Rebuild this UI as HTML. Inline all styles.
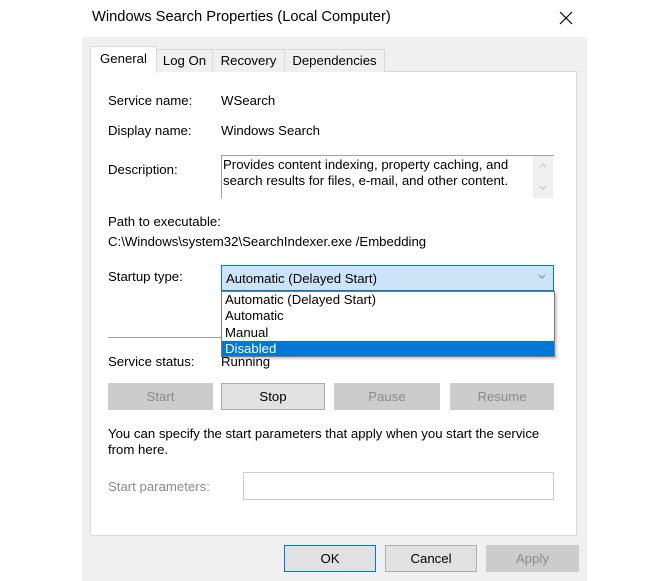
<!DOCTYPE html><html><head><style>
body{margin:0;width:670px;height:581px;background:#fff;position:relative;overflow:hidden;font-family:"Liberation Sans",sans-serif;font-size:13.2px;color:#000}
.a{position:absolute;white-space:nowrap}
.btn{position:absolute;box-sizing:border-box;text-align:center;line-height:25px;background:#e1e1e1;border:1px solid #adadad}
.dis{background:#ccc;border-color:#ccc;color:#8a8a8a}
.tab{position:absolute;box-sizing:border-box;top:49px;height:23px;background:#f0f0f0;border:1px solid #d9d9d9;border-bottom:none;text-align:center;line-height:22px}
</style></head><body>
<div class="a" style="left:92px;top:9px;font-size:14.7px">Windows Search Properties (Local Computer)</div>
<svg class="a" style="left:559px;top:11px" width="14" height="14"><path d="M1 1L13 13M13 1L1 13" stroke="#000" stroke-width="1.2"/></svg>
<div class="a" style="left:82px;top:37px;width:505px;height:544px;background:#f0f0f0"></div>
<div class="a" style="left:90px;top:71px;width:487px;height:465px;background:#fff;border:1px solid #d9d9d9;box-sizing:border-box"></div>
<div class="tab" style="left:156px;width:57px">Log On</div>
<div class="tab" style="left:212px;width:73px">Recovery</div>
<div class="tab" style="left:284px;width:101px">Dependencies</div>
<div class="tab" style="left:90px;top:46px;height:27px;width:67px;background:#fff;line-height:24px">General</div>
<div class="a" style="left:108px;top:93px">Service name:</div>
<div class="a" style="left:221px;top:93px">WSearch</div>
<div class="a" style="left:108px;top:123px">Display name:</div>
<div class="a" style="left:221px;top:123px">Windows Search</div>
<div class="a" style="left:108px;top:162px">Description:</div>
<div class="a" style="left:221px;top:155px;width:333px;height:43px;border-top:1px solid #a0a0a0;border-left:1px solid #a0a0a0;box-sizing:border-box"></div>
<div class="a" style="left:533px;top:156px;width:20px;height:42px;background:#f0f0f0"></div>
<svg class="a" style="left:533px;top:156px" width="20" height="42"><path d="M7 11L10 8L13 11M7 30L10 33L13 30" stroke="#c0c0c0" fill="none"/></svg>
<div class="a" style="left:223px;top:157px;line-height:16px">Provides content indexing, property caching, and<br>search results for files, e-mail, and other content.</div>
<div class="a" style="left:108px;top:214px">Path to executable:</div>
<div class="a" style="left:108px;top:234px">C:\Windows\system32\SearchIndexer.exe /Embedding</div>
<div class="a" style="left:108px;top:269px">Startup type:</div>
<div class="a" style="left:221px;top:265px;width:333px;height:26px;background:#cce4f7;border:1px solid #0078d7;box-sizing:border-box"></div>
<div class="a" style="left:226px;top:271px">Automatic (Delayed Start)</div>
<svg class="a" style="left:538px;top:274px" width="8" height="6"><path d="M1 1L4 4L7 1" stroke="#888" fill="none"/></svg>
<div class="a" style="left:108px;top:337px;width:120px;height:1px;background:#a0a0a0"></div>
<div class="a" style="left:108px;top:354px">Service status:</div>
<div class="a" style="left:221px;top:354px">Running</div>
<div class="a" style="left:221px;top:291px;width:334px;height:66px;background:#fff;border:1px solid #7a7a7a;box-sizing:border-box;box-shadow:2px 2px 2px rgba(0,0,0,.2)"></div>
<div class="a" style="left:222px;top:341px;width:332px;height:15px;background:#0078d7"></div>
<div class="a" style="left:225px;top:292px;line-height:16.3px">Automatic (Delayed Start)<br>Automatic<br>Manual<br><span style="color:#fff">Disabled</span></div>
<div class="btn dis" style="left:108px;top:383px;width:105px;height:27px">Start</div>
<div class="btn" style="left:221px;top:383px;width:104px;height:27px">Stop</div>
<div class="btn dis" style="left:334px;top:383px;width:106px;height:27px">Pause</div>
<div class="btn dis" style="left:450px;top:383px;width:104px;height:27px">Resume</div>
<div class="a" style="left:108px;top:426px;line-height:16px">You can specify the start parameters that apply when you start the service<br>from here.</div>
<div class="a" style="left:108px;top:479px;color:#8a8a8a">Start parameters:</div>
<div class="a" style="left:243px;top:472px;width:311px;height:28px;border:1px solid #ccc;box-sizing:border-box"></div>
<div class="btn" style="left:284px;top:545px;width:92px;height:27px;border-color:#0078d7">OK</div>
<div class="btn" style="left:385px;top:545px;width:92px;height:27px">Cancel</div>
<div class="btn dis" style="left:486px;top:545px;width:93px;height:27px">Apply</div>
</body></html>
